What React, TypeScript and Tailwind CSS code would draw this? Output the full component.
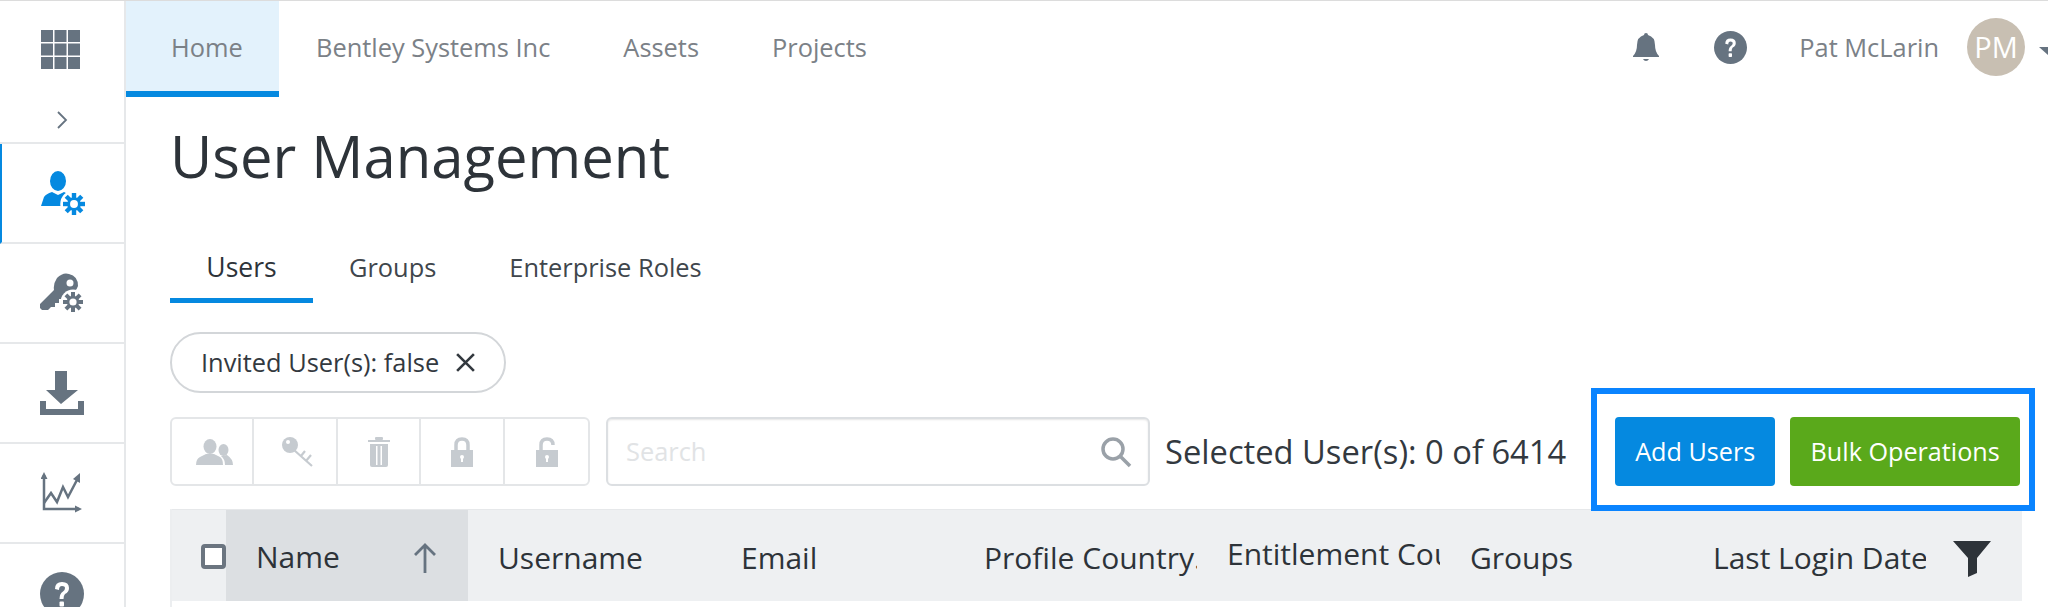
import React from 'react';

const Gear = ({ cx, cy, r, color }: { cx: number; cy: number; r: number; color: string }) => (
  <g>
    <circle cx={cx} cy={cy} r={r * 1.25} fill="#fff" />
    {[0, 45, 90, 135].map(a => (
      <rect key={a} x={cx - r * 0.2} y={cy - r} width={r * 0.4} height={r * 2} fill={color} transform={`rotate(${a} ${cx} ${cy})`} />
    ))}
    <circle cx={cx} cy={cy} r={r * 0.62} fill={color} />
    <circle cx={cx} cy={cy} r={r * 0.36} fill="#fff" />
  </g>
);

const GridIcon = () => (
  <svg width="39" height="39" viewBox="0 0 39 39" fill="#667380">
    {[0, 13.5, 27].map(y => [0, 13.5, 27].map(x => <rect key={`${x}-${y}`} x={x} y={y} width="12" height="12" />))}
  </svg>
);

const UserGear = () => (
  <svg width="44" height="44" viewBox="0 0 44 44">
    <ellipse cx="17" cy="10" rx="8" ry="10" fill="#0589e0" />
    <path d="M0 35 L3 26 Q5 23 11 21 L17 24 L23 21 L29 24 L22 35 Z" fill="#0589e0" />
    <Gear cx={33} cy={33} r={11} color="#0589e0" />
  </svg>
);

const KeyGear = () => (
  <svg width="44" height="40" viewBox="0 0 44 40">
    <path d="M0 35 L0 31 L14 17 Q13 11 17 5 Q23 -1 29 1 Q38 3 38 13 Q36 20 27 22 L23 26 L19 26 L19 30 L15 30 L15 34 L11 34 L8 37 L2 37 Z" fill="#667380" />
    <circle cx="30" cy="10" r="3.5" fill="#fff" />
    <Gear cx={33} cy={29} r={10} color="#667380" />
  </svg>
);

const DownloadIcon = () => (
  <svg width="44" height="44" viewBox="0 0 44 44" fill="#667380">
    <path d="M15 0 H27 V19 H38 L21 33 L6 19 H15 Z" />
    <path d="M0 30 H6 V38 H38 V30 H44 V44 H0 Z" />
  </svg>
);

const ChartIcon = () => (
  <svg width="42" height="42" viewBox="0 0 42 42" fill="none" stroke="#667380" strokeWidth="2.5">
    <path d="M3 3 V37 H38" />
    <path d="M3 0 L6.5 7 H-0.5 Z M41 37 L34 33.5 V40.5 Z" fill="#667380" stroke="none" />
    <path d="M3 31 L10 21 L16 30 L22 15 L27 25 L37 6" />
    <path d="M39 1 L39 11 L32 7 Z" fill="#667380" stroke="none" />
  </svg>
);

const HelpIcon = ({ size }: { size: number }) => (
  <svg width={size} height={size} viewBox="0 0 44 44">
    <circle cx="22" cy="22" r="22" fill="#667380" />
    <path d="M15 17 Q15 10 22 10 Q29 10 29 16 Q29 20 25 22 Q23.500 23.500 23.500 27 H19.500 Q19.500 21.500 23 19.500 Q25 18 25 16 Q25 14 22 14 Q19 14 19 18 Z" fill="#fff" />
    <rect x="19.500" y="29.500" width="4.500" height="5" rx="1" fill="#fff" />
  </svg>
);

const BellIcon = () => (
  <svg width="26" height="28" viewBox="0 0 26 28" fill="#667380">
    <path d="M13 0 Q15 0 15 2 Q22 4 22 12 Q22 19 26 23 V24 H0 V23 Q4 19 4 12 Q4 4 11 2 Q11 0 13 0 Z" />
    <path d="M10 26 H16 Q15 28 13 28 Q11 28 10 26 Z" />
  </svg>
);

const UsersIcon = () => (
  <svg width="37" height="26" viewBox="0 0 37 26" fill="#c6cbd0">
    <ellipse cx="14" cy="7.500" rx="6.500" ry="7.500" />
    <path d="M0 26 Q0 20 4 18 L10 15 H18 L24 18 Q27 20 27 26 Z" />
    <ellipse cx="27.500" cy="11" rx="5" ry="6" />
    <path d="M29 26 Q29 20 25 17 L31 16 Q37 20 37 26 Z" />
  </svg>
);

const KeyIcon = () => (
  <svg width="32" height="30" viewBox="0 0 32 30" fill="none" stroke="#c6cbd0">
    <ellipse cx="8" cy="8" rx="8" ry="8" fill="#c6cbd0" stroke="none" />
    <circle cx="6" cy="5" r="2" fill="#fff" stroke="none" />
    <path d="M12 13 L30 29 M19 19 L23 14 M24 24 L29 18" strokeWidth="2.200" />
  </svg>
);

const TrashIcon = () => (
  <svg width="22" height="30" viewBox="0 0 22 30" fill="#c6cbd0">
    <rect x="0" y="3" width="22" height="2" />
    <rect x="7" y="0" width="8" height="3" rx="1" />
    <path d="M2 7 H20 V28 Q20 30 18 30 H4 Q2 30 2 28 Z" />
    <rect x="8" y="9" width="1.500" height="19" fill="#fff" />
    <rect x="12.500" y="9" width="1.500" height="19" fill="#fff" />
  </svg>
);

const LockIcon = ({ open }: { open?: boolean }) => (
  <svg width="22" height="30" viewBox="0 0 22 30" fill="none">
    <path d={open ? 'M5 14 V8 Q5 2 11 2 Q17 2 17 8' : 'M5 14 V8 Q5 2 11 2 Q17 2 17 8 V14'} stroke="#c6cbd0" strokeWidth="3.500" />
    <rect x="0" y="13" width="22" height="17" fill="#c6cbd0" />
    <rect x="10" y="20" width="2" height="5" fill="#fff" />
    <circle cx="11" cy="20" r="2" fill="#fff" />
  </svg>
);

const navItems = ['Bentley Systems Inc', 'Assets', 'Projects'];
const columns = ['Username', 'Email', 'Profile Country…', 'Entitlement Country', 'Groups', 'Last Login Date'];

export default function App() {
  return (
    <div className="flex h-[607px] w-[2048px] overflow-hidden border-t border-[#dcdcdc] bg-white font-['Open_Sans',sans-serif]">
      <aside className="flex w-[126px] shrink-0 flex-col border-r-2 border-[#e6e8ea]">
        <div className="flex h-[96px] shrink-0 items-center justify-center pr-[3px]">
          <GridIcon />
        </div>
        <div className="flex h-[47px] shrink-0 items-center justify-center border-b-2 border-[#e6e8ea]">
          <svg width="12" height="18" viewBox="0 0 12 18" fill="none" stroke="#667380" strokeWidth="1.800">
            <path d="M2 1 L10 9 L2 17" />
          </svg>
        </div>
        <div className="flex h-[100px] shrink-0 items-center justify-center border-b-2 border-l-2 border-b-[#e6e8ea] border-l-[#0589e0]">
          <UserGear />
        </div>
        <div className="flex h-[100px] shrink-0 items-center justify-center border-b-2 border-[#e6e8ea]">
          <KeyGear />
        </div>
        <div className="flex h-[100px] shrink-0 items-center justify-center border-b-2 border-[#e6e8ea]">
          <DownloadIcon />
        </div>
        <div className="flex h-[100px] shrink-0 items-center justify-center border-b-2 border-[#e6e8ea]">
          <ChartIcon />
        </div>
        <div className="flex h-[100px] shrink-0 items-center justify-center">
          <HelpIcon size={44} />
        </div>
      </aside>

      <main className="min-w-0 flex-1">
        <header className="flex h-[96px] items-stretch text-[25.4px] text-[#7b8187]">
          <div className="flex w-[153px] items-center justify-center border-b-[6px] border-[#0589e0] bg-[#e3f2fc] pl-[9px] pt-[2px]">Home</div>
          <nav className="flex items-center gap-[73px] pb-[4px] pl-[37px]">
            {navItems.map(n => (
              <span key={n}>{n}</span>
            ))}
          </nav>
          <div className="ml-auto flex items-center pb-[4px]">
            <BellIcon />
            <span className="ml-[55px]">
              <HelpIcon size={33} />
            </span>
            <span className="ml-[52px]">Pat McLarin</span>
            <div className="ml-[28px] flex h-[58px] w-[58px] items-center justify-center rounded-full bg-[#c8bfb2] text-[29px] text-white">PM</div>
            <div className="ml-[14px] mr-[-9px] mt-[8px] h-0 w-0 border-x-[9px] border-t-[8px] border-x-transparent border-t-[#667380]" />
          </div>
        </header>

        <div className="pl-[44px]">
          <h1 className="mt-[20px] text-[58px] leading-[78px] text-[#2d3339]">User Management</h1>

          <div className="mt-[48px] flex h-[60px] items-start text-[25.4px] text-[#3f464c]">
            <div className="flex h-[60px] w-[143px] justify-center border-b-[5px] border-[#0589e0] pt-[5px] text-[26.5px] text-[#2d3339]">Users</div>
            <div className="ml-[36px] pt-[5px]">Groups</div>
            <div className="ml-[73px] pt-[5px]">Enterprise Roles</div>
          </div>

          <div className="mt-[29px] flex h-[61px] w-[336px] items-center rounded-full border-2 border-[#d3d6d9] pl-[29px] text-[25.4px] text-[#33393f]">
            <span>Invited User(s): false</span>
            <svg className="ml-[16px]" width="21" height="21" viewBox="0 0 20 20" stroke="#33393f" strokeWidth="2.500">
              <path d="M2 2 L18 18 M18 2 L2 18" />
            </svg>
          </div>

          <div className="mt-[24px] flex h-[69px] items-center">
            <div className="flex h-[69px] w-[420px] rounded-[6px] border-2 border-[#e4e6e8]">
              <div className="flex w-[82px] items-center justify-center border-r-2 border-[#e4e6e8] pl-[4px]"><UsersIcon /></div>
              <div className="flex w-[84px] items-center justify-center border-r-2 border-[#e4e6e8] pl-[6px]"><KeyIcon /></div>
              <div className="flex w-[83px] items-center justify-center border-r-2 border-[#e4e6e8]"><TrashIcon /></div>
              <div className="flex w-[84px] items-center justify-center border-r-2 border-[#e4e6e8]"><LockIcon /></div>
              <div className="flex flex-1 items-center justify-center"><LockIcon open /></div>
            </div>
            <div className="ml-[16px] flex h-[69px] w-[544px] items-center justify-between rounded-[6px] border-2 border-[#dcdfe2] pl-[18px] pr-[16px] text-[25.4px] text-[#e1e3e5] shadow-[inset_0_1px_2px_rgba(0,0,0,0.1)]">
              <span>Search</span>
              <svg width="32" height="32" viewBox="0 0 32 32" fill="none" stroke="#9aa1a8" strokeWidth="3.500">
                <circle cx="13" cy="13" r="10" />
                <path d="M20 20 L30 30" />
              </svg>
            </div>
            <span className="ml-[15px] text-[32.7px] whitespace-nowrap text-[#33393f]">Selected User(s): 0 of 6414</span>
            <div className="ml-[25px] mt-[-4px] flex h-[123px] w-[444px] shrink-0 items-center gap-[15px] border-[6px] border-[#0a84ff] pl-[18px] pt-[4px]">
              <button className="flex h-[69px] w-[160px] items-center justify-center rounded-[4px] bg-[#0589e0] text-[25.2px] text-white">Add Users</button>
              <button className="flex h-[69px] w-[230px] items-center justify-center rounded-[4px] bg-[#5aa91b] text-[25.2px] text-white">Bulk Operations</button>
            </div>
          </div>

          <div className="mt-[23px] h-[100px] w-[1852px] border-l-2 border-[#eceef0]">
            <div className="flex h-[92px] items-center border-t border-[#e6e8ea] bg-[#eef0f2] text-[30px] text-[#2d3339]">
              <div className="flex w-[54px] items-center pl-[29px] pt-[2px]">
                <div className="h-[25px] w-[25px] shrink-0 rounded-[4px] border-[4px] border-[#6b7580] bg-white" />
              </div>
              <div className="flex h-full w-[242px] items-center justify-between bg-[#dcdfe2] pl-[30px] pr-[32px]">
                <span className="pt-[2px]">Name</span>
                <svg className="mt-[4px]" width="22" height="30" viewBox="0 0 22 30" fill="none" stroke="#667380" strokeWidth="2.800">
                  <path d="M11 30 V2 M1 12 L11 2 L21 12" />
                </svg>
              </div>
              {columns.map((c, i) => (
                <div key={c} className={`w-[243px] shrink-0 pl-[30px] ${i === 3 ? 'pb-[4px]' : 'pt-[3px]'}`}>
                  <div className="overflow-hidden whitespace-nowrap">{c}</div>
                </div>
              ))}
              <svg className="ml-[27px] mt-[6px] shrink-0" width="38" height="36" viewBox="0 0 38 36" fill="#2d3339">
                <path d="M0 0 H38 L24 17 V32 L15 36 V17 Z" />
              </svg>
            </div>
          </div>
        </div>
      </main>
    </div>
  );
}
